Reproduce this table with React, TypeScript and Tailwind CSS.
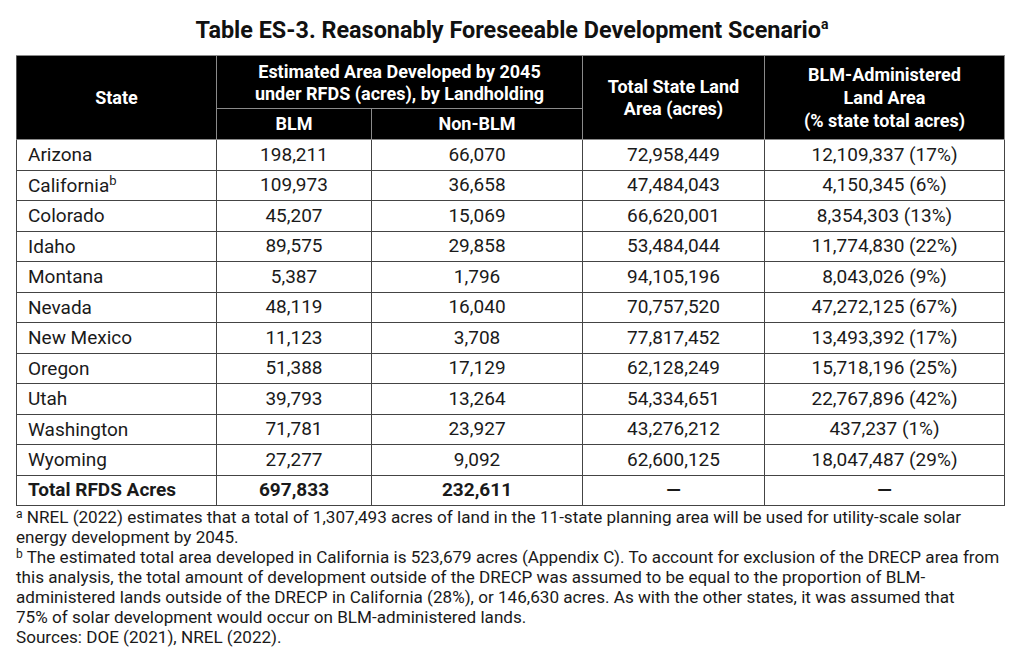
import React from "react";

const rows: [string, string, string, string, string, string?][] = [
  ["Arizona", "198,211", "66,070", "72,958,449", "12,109,337 (17%)"],
  ["California", "109,973", "36,658", "47,484,043", "4,150,345 (6%)", "b"],
  ["Colorado", "45,207", "15,069", "66,620,001", "8,354,303 (13%)"],
  ["Idaho", "89,575", "29,858", "53,484,044", "11,774,830 (22%)"],
  ["Montana", "5,387", "1,796", "94,105,196", "8,043,026 (9%)"],
  ["Nevada", "48,119", "16,040", "70,757,520", "47,272,125 (67%)"],
  ["New Mexico", "11,123", "3,708", "77,817,452", "13,493,392 (17%)"],
  ["Oregon", "51,388", "17,129", "62,128,249", "15,718,196 (25%)"],
  ["Utah", "39,793", "13,264", "54,334,651", "22,767,896 (42%)"],
  ["Washington", "71,781", "23,927", "43,276,212", "437,237 (1%)"],
  ["Wyoming", "27,277", "9,092", "62,600,125", "18,047,487 (29%)"],
];

export default function App() {
  return (
    <div
      className="w-[1024px] h-[657px] bg-white text-[#1a1a1a] px-4 overflow-hidden"
      style={{ fontFamily: "Roboto, 'Liberation Sans', sans-serif" }}
    >
      <div className="pt-[16px] h-[55px] text-center text-[23.4px] leading-[28px] font-bold text-[#111]">
        Table ES-3. Reasonably Foreseeable Development Scenario
        <sup className="text-[14px] font-bold -top-[9px]">a</sup>
      </div>
      <table className="w-[988px] table-fixed border-collapse text-[19px]">
        <colgroup>
          <col className="w-[200px]" />
          <col className="w-[155px]" />
          <col className="w-[211px]" />
          <col className="w-[182px]" />
          <col className="w-[240px]" />
        </colgroup>
        <thead className="bg-black text-white font-bold text-[18px] leading-[22px]">
          <tr className="h-[53px]">
            <th rowSpan={2} className="border border-[#8a8a8a] border-l-[#555] font-bold">
              State
            </th>
            <th colSpan={2} className="border border-[#8a8a8a] font-bold pt-[2px]">
              Estimated Area Developed by 2045
              <br />
              under RFDS (acres), by Landholding
            </th>
            <th rowSpan={2} className="border border-[#8a8a8a] font-bold">
              Total State Land
              <br />
              Area (acres)
            </th>
            <th rowSpan={2} className="border border-[#8a8a8a] font-bold leading-[23px]">
              BLM-Administered
              <br />
              Land Area
              <br />
              (% state total acres)
            </th>
          </tr>
          <tr className="h-[31px]">
            <th className="border border-[#8a8a8a] font-bold">BLM</th>
            <th className="border border-[#8a8a8a] font-bold">Non-BLM</th>
          </tr>
        </thead>
        <tbody>
          {rows.map((r) => (
            <tr key={r[0]} className="h-[30.33px]">
              <td className="border border-[#444] pl-[11px] pt-[1px]">
                {r[0]}
                {r[5] && <sup className="text-[13px] -top-[7px]">{r[5]}</sup>}
              </td>
              <td className="border border-[#444] text-center">{r[1]}</td>
              <td className="border border-[#444] text-center">{r[2]}</td>
              <td className="border border-[#444] text-center">{r[3]}</td>
              <td className="border border-[#444] text-center">{r[4]}</td>
            </tr>
          ))}
          <tr className="h-[30.33px] font-bold">
            <td className="border border-[#444] pl-[11px]">Total RFDS Acres</td>
            <td className="border border-[#444] text-center">697,833</td>
            <td className="border border-[#444] text-center">232,611</td>
            <td className="border border-[#444] text-center">—</td>
            <td className="border border-[#444] text-center">—</td>
          </tr>
        </tbody>
      </table>
      <div className="text-[17.1px] leading-[20px] pt-[1px] whitespace-nowrap">
        <p>
          <sup className="text-[12px] -top-[5px]">a</sup> NREL (2022) estimates that a total of
          1,307,493 acres of land in the 11-state planning area will be used for utility-scale solar
          <br />
          energy development by 2045.
        </p>
        <p>
          <sup className="text-[12px] -top-[5px]">b</sup> The estimated total area developed in
          California is 523,679 acres (Appendix C). To account for exclusion of the DRECP area from
          <br />
          this analysis, the total amount of development outside of the DRECP was assumed to be equal
          to the proportion of BLM-
          <br />
          administered lands outside of the DRECP in California (28%), or 146,630 acres. As with the
          other states, it was assumed that
          <br />
          75% of solar development would occur on BLM-administered lands.
        </p>
        <p>Sources: DOE (2021), NREL (2022).</p>
      </div>
    </div>
  );
}
